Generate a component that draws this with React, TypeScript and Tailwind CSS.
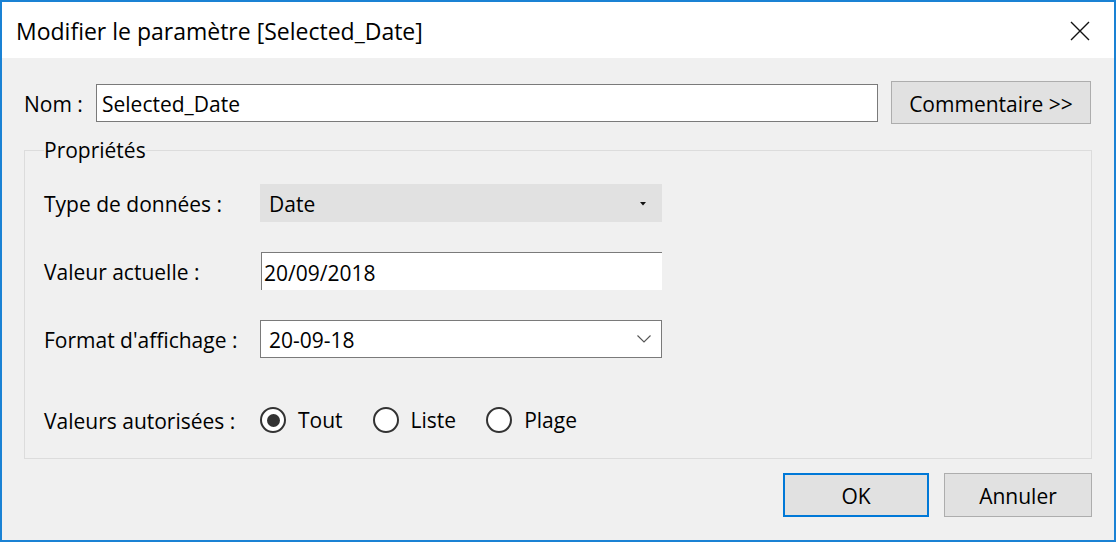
import { ReactNode } from 'react'

const font = { fontFamily: '"Open Sans", "Noto Sans", sans-serif' }

function Radio({ label, checked }: { label: string; checked?: boolean }) {
  return (
    <div className="flex items-center">
      <span className="flex h-[26px] w-[26px] items-center justify-center rounded-full border-2 border-[#333] bg-white">
        {checked && <span className="h-[13px] w-[13px] rounded-full bg-[#333]" />}
      </span>
      <span className="ml-[12px]">{label}</span>
    </div>
  )
}

function Row({ label, children, className = '' }: { label: string; children: ReactNode; className?: string }) {
  return (
    <div className={`flex items-center ${className}`}>
      <span className="w-[216px] shrink-0 pt-[2px]">{label}</span>
      {children}
    </div>
  )
}

export default function App() {
  return (
    <div
      className="flex h-[542px] w-[1116px] flex-col border-2 border-[#1a82d4] bg-[#f0f0f0] text-[21px] leading-[26px] text-black"
      style={font}
    >
      <div className="flex h-[56px] shrink-0 items-center justify-between bg-white pl-[14px] pr-[24px]">
        <span className="pt-[2px] text-[23px]">Modifier le paramètre [Selected_Date]</span>
        <svg width="20" height="20" viewBox="0 0 20 20" className="mt-[1px]">
          <path d="M1 1 L19 19 M19 1 L1 19" stroke="#111" strokeWidth="1.4" fill="none" />
        </svg>
      </div>

      <div className="flex flex-1 flex-col pl-[22px] pr-[22px]">
        <div className="mt-[23px] flex h-[43px] items-center">
          <span className="w-[72px] shrink-0 pt-[2px]">Nom :</span>
          <div className="flex h-[38px] w-[782px] items-center border border-[#7a7a7a] bg-white pl-[5px] pt-[2px]">Selected_Date</div>
          <button className="ml-[13px] h-[43px] w-[200px] border border-[#adadad] bg-[#e1e1e1] pt-[2px]">Commentaire &gt;&gt;</button>
        </div>

        <fieldset className="mt-[13px] h-[322px] border border-[#dcdcdc] px-[19px]">
          <legend className="px-0 leading-[26px]">Propriétés</legend>

          <Row label="Type de données :" className="mt-[21px] h-[38px]">
            <div className="flex h-[38px] w-[402px] items-center justify-between bg-[#e1e1e1] pl-[9px] pr-[16px] pt-[2px]">
              <span>Date</span>
              <svg width="6" height="4" viewBox="0 0 6 4">
                <path d="M0 0 H6 L3 3.5 Z" fill="#111" />
              </svg>
            </div>
          </Row>

          <Row label="Valeur actuelle :" className="mt-[30px] h-[38px]">
            <div className="ml-[1px] flex h-[38px] w-[401px] items-center border-l border-t border-[#7a7a7a] bg-white pl-[2px] pt-[2px]">
              20/09/2018
            </div>
          </Row>

          <Row label="Format d'affichage :" className="mt-[30px] h-[38px]">
            <div className="flex h-[38px] w-[402px] items-center justify-between border border-[#7a7a7a] bg-white pl-[8px] pr-[10px]">
              <span className="pt-[2px]">20-09-18</span>
              <svg width="14" height="8" viewBox="0 0 14 8">
                <path d="M0.5 0.5 L7 7 L13.5 0.5" stroke="#555" strokeWidth="1.1" fill="none" />
              </svg>
            </div>
          </Row>

          <Row label="Valeurs autorisées :" className="mt-[49px] h-[26px]">
            <div className="flex items-center gap-[30px]">
              <Radio label="Tout" checked />
              <Radio label="Liste" />
              <Radio label="Plage" />
            </div>
          </Row>
        </fieldset>

        <div className="mt-[14px] flex justify-end gap-[15px]">
          <button className="h-[44px] w-[146px] border-2 border-[#0078d7] bg-[#e1e1e1] pt-[2px]">OK</button>
          <button className="h-[44px] w-[148px] border border-[#adadad] bg-[#e1e1e1] pt-[2px]">Annuler</button>
        </div>
      </div>
    </div>
  )
}
